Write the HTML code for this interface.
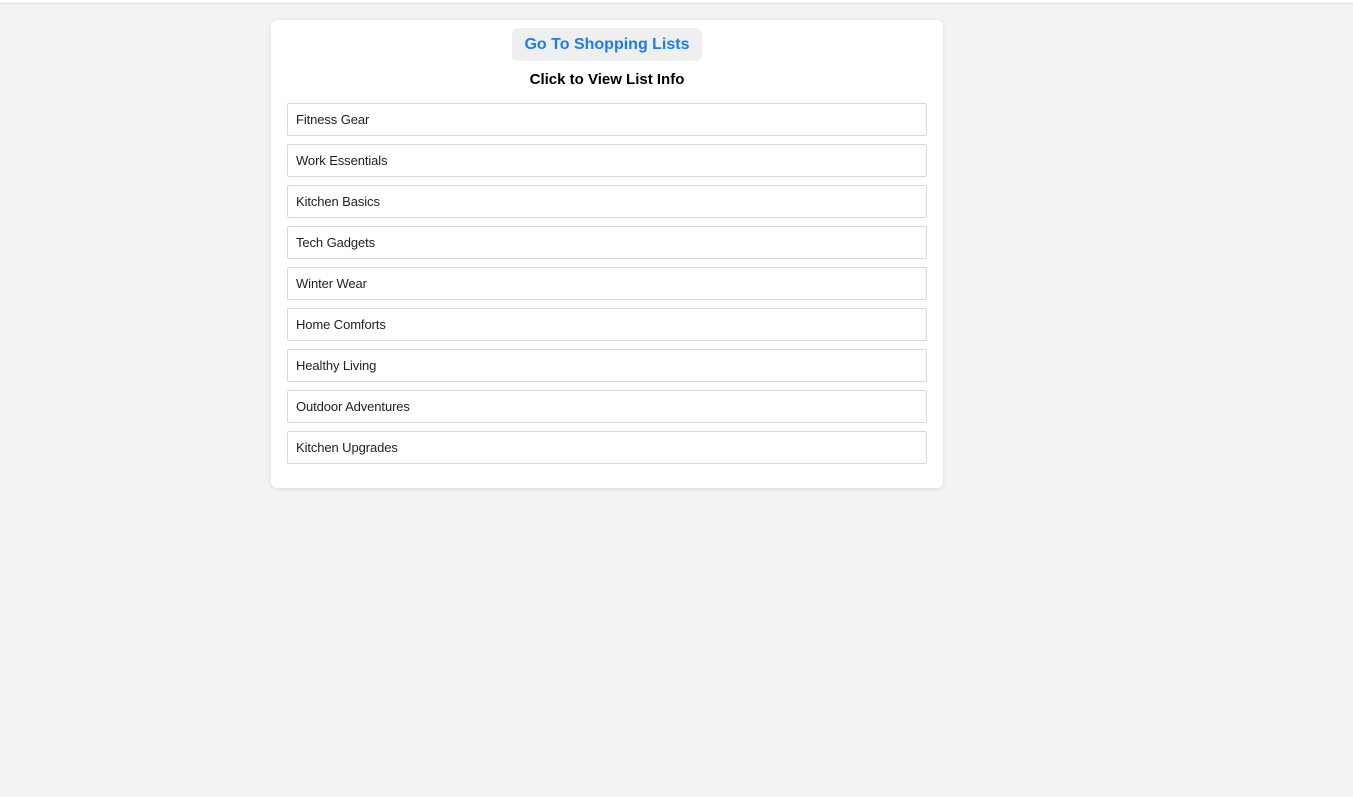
<!DOCTYPE html>
<html><head><style>
body{margin:0;background:#f3f3f3;font-family:"Liberation Sans",Arial,sans-serif;width:1353px;height:797px;overflow:hidden;position:relative}
.top{position:absolute;top:0;left:0;right:0;height:3px;background:#fff;border-bottom:1px solid #e0e0e0}
.card{position:absolute;left:271px;top:20px;width:672px;height:468px;background:#fff;border-radius:6px;box-shadow:0 1px 4px rgba(0,0,0,.1)}
.btn{position:absolute;left:241px;top:8px;width:190px;height:33px;background:#efefef;border-radius:6px;color:#1a7cf5;font-weight:bold;font-size:16px;line-height:34px;text-align:center}
h3{position:absolute;left:0;right:0;top:51px;margin:0;text-align:center;font-size:15px;font-weight:bold;color:#000}
.item{position:absolute;left:16px;width:630px;height:31px;border:1px solid #d8d8d8;border-radius:2px;font-size:13px;color:#222;line-height:31px;padding-left:8px;box-sizing:content-box;letter-spacing:-0.1px}
</style></head><body>
<div class="top"></div>
<div class="card">
<div class="btn">Go To Shopping Lists</div>
<h3>Click to View List Info</h3>
<div class="item" style="top:83px">Fitness Gear</div>
<div class="item" style="top:124px">Work Essentials</div>
<div class="item" style="top:165px">Kitchen Basics</div>
<div class="item" style="top:206px">Tech Gadgets</div>
<div class="item" style="top:247px">Winter Wear</div>
<div class="item" style="top:288px">Home Comforts</div>
<div class="item" style="top:329px">Healthy Living</div>
<div class="item" style="top:370px">Outdoor Adventures</div>
<div class="item" style="top:411px">Kitchen Upgrades</div>
</div>
</body></html>
